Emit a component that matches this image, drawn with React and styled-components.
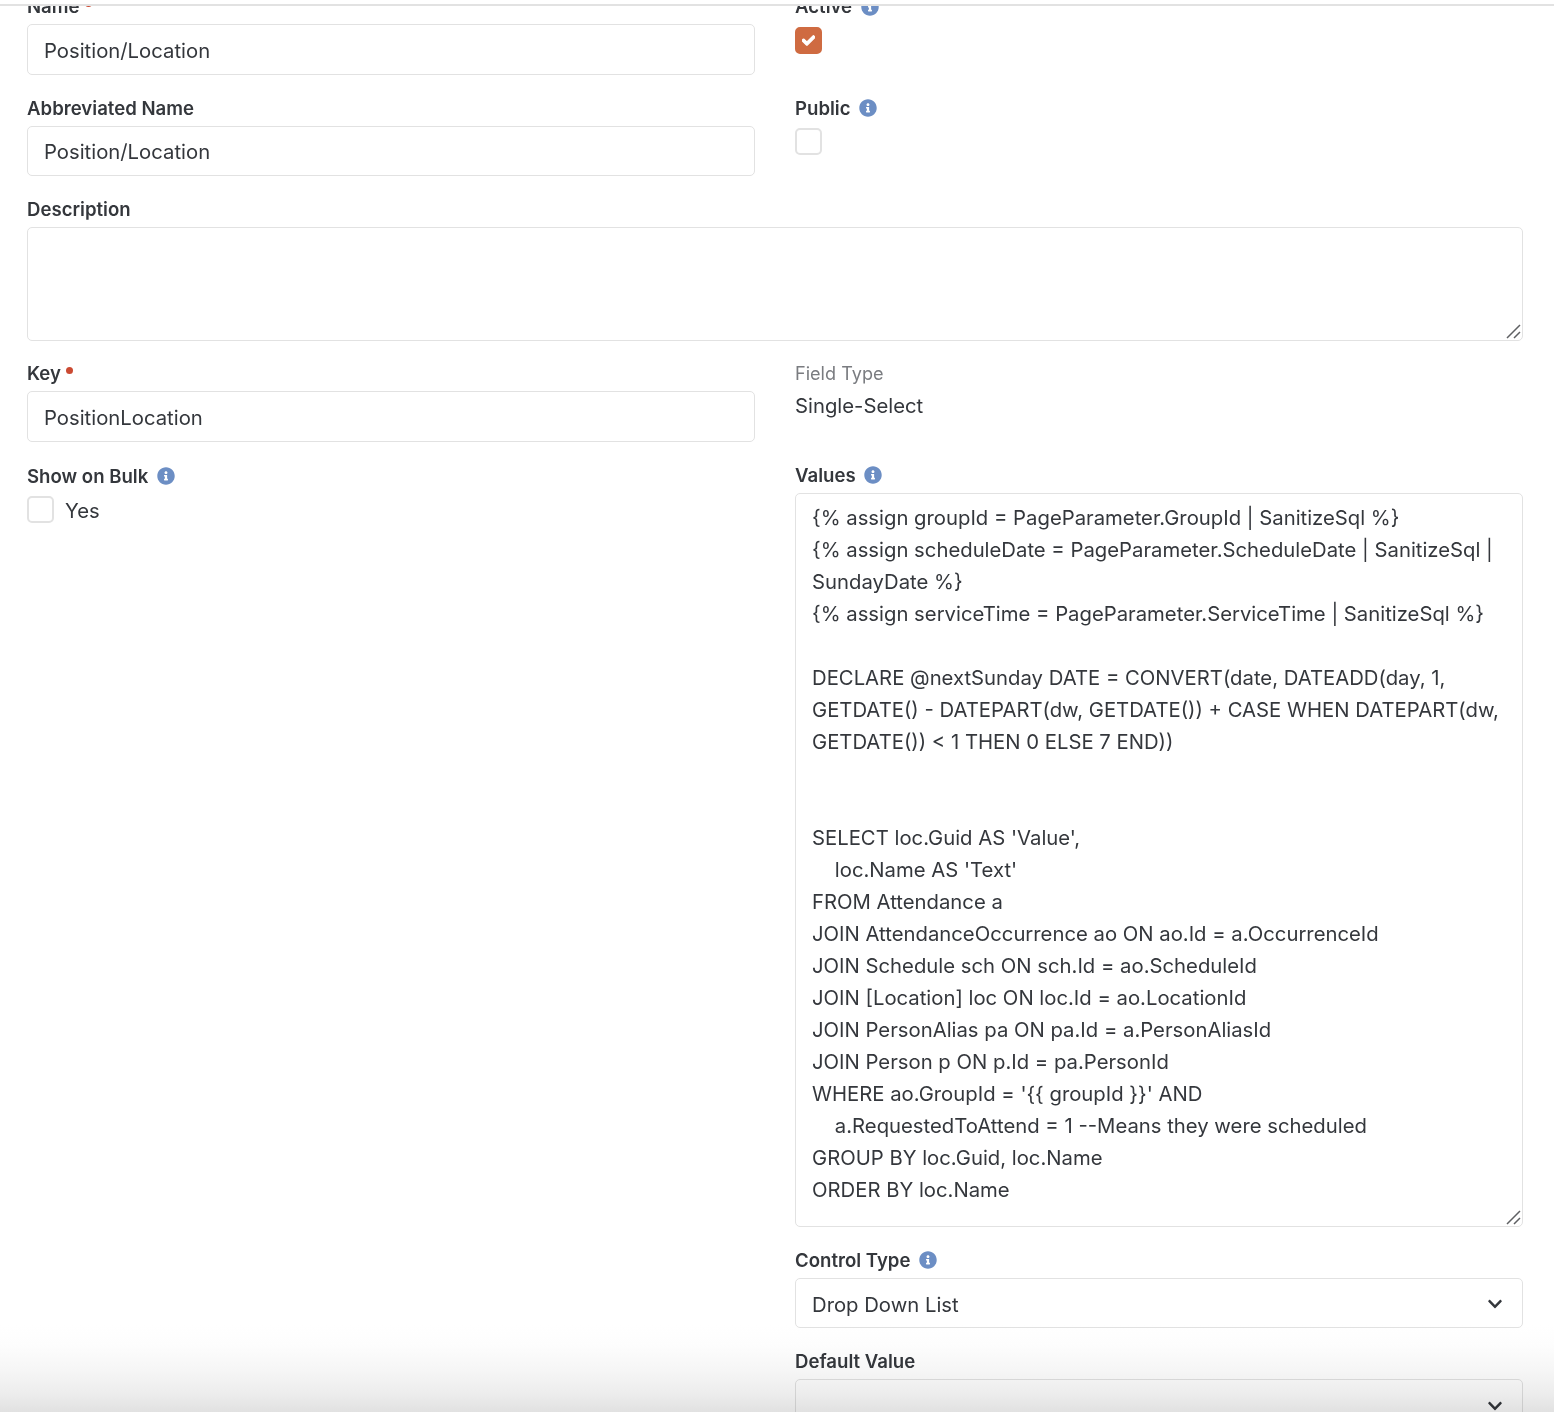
import styled, { createGlobalStyle } from "styled-components";
import { FaCheck, FaChevronDown, FaInfoCircle } from "react-icons/fa";

const GlobalStyle = createGlobalStyle`
  html, body {
    margin: 0;
    padding: 0;
    background: #fff;
    height: 100%;
    overflow: hidden;
  }
  body {
    font-family: Inter, "Liberation Sans", sans-serif;
    color: #34373c;
  }
`;

const sqlText = `{% assign groupId = PageParameter.GroupId | SanitizeSql %}
{% assign scheduleDate = PageParameter.ScheduleDate | SanitizeSql | SundayDate %}
{% assign serviceTime = PageParameter.ServiceTime | SanitizeSql %}

DECLARE @nextSunday DATE = CONVERT(date, DATEADD(day, 1, GETDATE() - DATEPART(dw, GETDATE()) + CASE WHEN DATEPART(dw, GETDATE()) < 1 THEN 0 ELSE 7 END))


SELECT loc.Guid AS 'Value',
    loc.Name AS 'Text'
FROM Attendance a
JOIN AttendanceOccurrence ao ON ao.Id = a.OccurrenceId
JOIN Schedule sch ON sch.Id = ao.ScheduleId
JOIN [Location] loc ON loc.Id = ao.LocationId
JOIN PersonAlias pa ON pa.Id = a.PersonAliasId
JOIN Person p ON p.Id = pa.PersonId
WHERE ao.GroupId = '{{ groupId }}' AND
    a.RequestedToAttend = 1 --Means they were scheduled
GROUP BY loc.Guid, loc.Name
ORDER BY loc.Name`;

const App = () => {
  return (
    <>
      <GlobalStyle />
      <Page>
        <TopLine />
        <Viewport>
          <Form>
            <TwoCols>
              <Field>
                <Label>
                  Name <Required />
                </Label>
                <TextInput>Position/Location</TextInput>
              </Field>
              <Field>
                <Label>
                  Active <Info />
                </Label>
                <Checkbox $checked $top={3}>
                  <CheckMark />
                </Checkbox>
              </Field>
            </TwoCols>
            <TwoCols>
              <Field>
                <Label>Abbreviated Name</Label>
                <TextInput>Position/Location</TextInput>
              </Field>
              <Field>
                <Label>
                  Public <Info />
                </Label>
                <Checkbox />
              </Field>
            </TwoCols>
            <DescriptionField>
              <Label>Description</Label>
              <TextArea $height={113.6}>
                <Grip />
              </TextArea>
            </DescriptionField>
            <TwoCols>
              <Column $gap={24}>
                <Field>
                  <Label>
                    Key <Required />
                  </Label>
                  <TextInput>PositionLocation</TextInput>
                </Field>
                <Field>
                  <Label>
                    Show on Bulk <Info />
                  </Label>
                  <CheckRow>
                    <Checkbox />
                    <CheckText>Yes</CheckText>
                  </CheckRow>
                </Field>
              </Column>
              <Column $gap={23}>
                <Field>
                  <MutedLabel>Field Type</MutedLabel>
                  <StaticValue>Single-Select</StaticValue>
                </Field>
                <Field>
                  <Label>
                    Values <Info />
                  </Label>
                  <TextArea $height={734}>
                    {sqlText}
                    <Grip />
                  </TextArea>
                </Field>
                <Field>
                  <Label>
                    Control Type <Info />
                  </Label>
                  <Select>
                    Drop Down List
                    <Chevron />
                  </Select>
                </Field>
                <Field>
                  <Label>Default Value</Label>
                  <Select>
                    <Chevron />
                  </Select>
                </Field>
              </Column>
            </TwoCols>
          </Form>
        </Viewport>
        <BottomFade />
      </Page>
    </>
  );
};

const Info = () => (
  <InfoIcon>
    <FaInfoCircle />
  </InfoIcon>
);

const Grip = () => (
  <GripIcon viewBox="0 0 15 15" aria-hidden="true">
    <path d="M1 14 L14 1 M8 14 L14 8" stroke="#5f6063" strokeWidth="1.5" fill="none" />
  </GripIcon>
);

const Page = styled.div`
  position: relative;
  width: 1554px;
  height: 1412px;
  overflow: hidden;
  background: #fff;
`;

const TopLine = styled.div`
  height: 2px;
  margin-top: 4px;
  background: #e2e2e2;
`;

const Viewport = styled.div`
  height: 1406px;
  overflow: hidden;
`;

const Form = styled.div`
  display: flex;
  flex-direction: column;
  gap: 23px;
  margin-top: -10px;
  padding: 0 31px 0 27px;
`;

const TwoCols = styled.div`
  display: grid;
  grid-template-columns: 728px 728px;
  column-gap: 40px;
  align-items: start;
`;

const Column = styled.div`
  display: flex;
  flex-direction: column;
  gap: ${(p) => p.$gap}px;
`;

const Field = styled.div`
  display: flex;
  flex-direction: column;
`;

const DescriptionField = styled(Field)`
  margin-bottom: -0.2px;
`;

const Label = styled.div`
  display: flex;
  align-items: center;
  gap: 8.5px;
  height: 21px;
  margin-bottom: 7px;
  font-size: 18.6px;
  font-weight: 600;
  line-height: 21px;
  color: #34373c;
`;

const MutedLabel = styled(Label)`
  font-size: 18.1px;
  font-weight: 400;
  color: #7a7c80;
`;

const Required = styled.span`
  width: 7px;
  height: 7px;
  margin: -6px 0 0 -3px;
  border-radius: 50%;
  background: #cb4a32;
`;

const InfoIcon = styled.span`
  display: inline-flex;
  color: #6c8ec4;
  font-size: 18px;
`;

const TextInput = styled.div`
  box-sizing: border-box;
  height: 50.5px;
  padding: 2px 16px 0;
  display: flex;
  align-items: center;
  background: #fff;
  border: 1px solid #e2e2e2;
  border-radius: 5px;
  font-size: 20.3px;
`;

const TextArea = styled.div`
  position: relative;
  box-sizing: border-box;
  height: ${(p) => p.$height}px;
  padding: 8px 16px;
  background: #fff;
  border: 1px solid #e2e2e2;
  border-radius: 5px;
  font-size: 20.3px;
  line-height: 32px;
  white-space: pre-wrap;
`;

const GripIcon = styled.svg`
  position: absolute;
  right: 1px;
  bottom: 1px;
  width: 15px;
  height: 15px;
`;

const Select = styled(TextInput)`
  justify-content: space-between;
`;

const Chevron = styled(FaChevronDown)`
  margin-left: auto;
  margin-right: 3px;
  width: 16px;
  height: 16px;
  color: #34373c;
`;

const StaticValue = styled.div`
  font-size: 20.3px;
  line-height: 30px;
  height: 50.4px;
`;

const Checkbox = styled.div`
  box-sizing: border-box;
  display: flex;
  align-items: center;
  justify-content: center;
  width: 27px;
  height: 27px;
  margin-top: ${(p) => p.$top ?? 2}px;
  border: 2px solid ${(p) => (p.$checked ? "#cf6b41" : "#e2e2e2")};
  border-radius: 5px;
  background: ${(p) => (p.$checked ? "#cf6b41" : "#fff")};
  color: #fff;
  font-size: 13px;
`;

const CheckMark = styled(FaCheck)`
  stroke: currentColor;
  stroke-width: 40px;
`;

const CheckRow = styled.div`
  display: flex;
  align-items: center;
  gap: 11px;
`;

const CheckText = styled.span`
  font-size: 20.3px;
  margin-top: 4px;
`;

const BottomFade = styled.div`
  position: absolute;
  left: 0;
  right: 0;
  bottom: 0;
  height: 87px;
  background: linear-gradient(
    to bottom,
    #fff 0%,
    #fdfdfd 23%,
    #f6f6f6 52%,
    #ececec 80%,
    #e1e1e1 100%
  );
  mix-blend-mode: multiply;
  pointer-events: none;
`;

export default App;
